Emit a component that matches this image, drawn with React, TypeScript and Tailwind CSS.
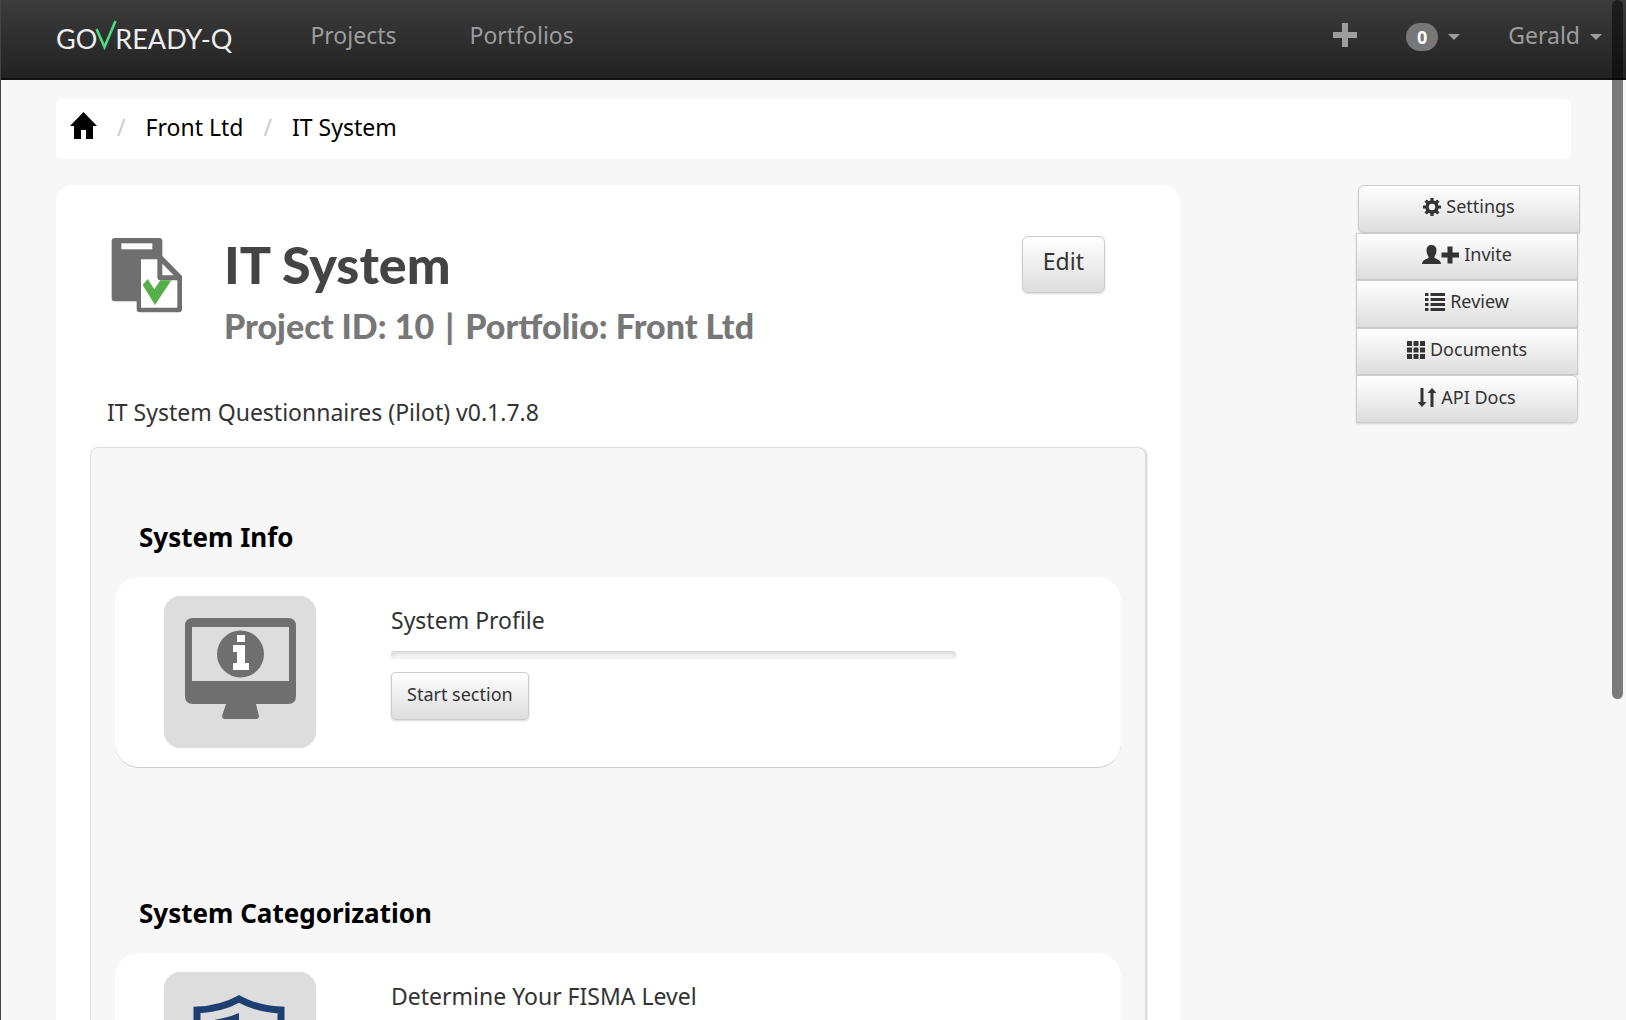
import type { ReactNode } from "react";

const buttonFace =
  "border border-[#cccccc] bg-linear-to-b from-white to-[#dddddd] text-[#333333] shadow-[0_1px_2px_rgba(0,0,0,0.15)]";

function Caret() {
  return <span className="mt-1 inline-block border-x-6 border-t-6 border-x-transparent border-t-current" />;
}

function CheckMark() {
  return (
    <svg width="22" height="30" viewBox="0 0 22 30" fill="none" className="-mx-0.5 mb-2" aria-hidden="true">
      <path d="M1.5 9 L9.5 27 L20.5 1" stroke="#4ade80" strokeWidth="2.6" />
    </svg>
  );
}

function HomeIcon() {
  return (
    <svg width="27" height="27" viewBox="0 0 27 27" className="mb-1" aria-hidden="true">
      <path d="M13.5 0 L27 14 H23 V27 H16 V18 H11 V27 H4 V14 H0 Z" fill="#000" />
    </svg>
  );
}

function ProjectIcon() {
  return (
    <svg width="90" height="90" viewBox="0 0 270 270" aria-hidden="true">
      <path fill="#6f6f6f" d="M45 24 H177 Q187 24 187 34 V78 L246 138 V237 Q246 247 236 247 H120 Q110 247 110 237 V214 H45 Q35 214 35 204 V34 Q35 24 45 24 Z" />
      <rect x="64" y="40" width="93" height="18" fill="#fff" />
      <path fill="#fff" d="M123 88 H172 V142 Q172 151 181 151 H232 V233 H123 Z" />
      <path fill="#fff" d="M187 101 L221 136 H187 Z" />
      <path fill="#56b04a" d="M128 165 L143 147 L163 178 L181 151 H214 L165 225 Z" />
    </svg>
  );
}

function MonitorIcon() {
  return (
    <svg width="152" height="152" viewBox="0 0 152 152" aria-hidden="true">
      <path fill="#6f6f6f" fillRule="evenodd" d="M29 22 H124 Q132 22 132 30 V100 Q132 108 124 108 H92 L95 120 Q95 123 92 123 H61 Q58 123 58 120 L62 108 H29 Q21 108 21 100 V30 Q21 22 29 22 Z M28 31 V85 H125 V31 Z" />
      <circle cx="76.500" cy="58" r="23.500" fill="#6f6f6f" />
      <path fill="#fff" d="M73 39 H81 V46 H73 Z M69 49 H81 V67 H85 V74 H69 V67 H73 V56 H69 Z" />
    </svg>
  );
}

function ShieldIcon() {
  return (
    <svg width="152" height="152" viewBox="0 0 152 152" aria-hidden="true">
      <path d="M75 27 Q57 37 33 38 V76 Q34 110 75 128 Q116 110 117 76 V38 Q93 37 75 27 Z" fill="none" stroke="#1d3f72" strokeWidth="7" />
      <path d="M75 41 Q64 46 44 49 V76 Q45 96 75 114 Z" fill="#1d3f72" />
    </svg>
  );
}

function GearIcon() {
  return (
    <svg width="18" height="18" viewBox="0 0 18 18" aria-hidden="true">
      <circle cx="9" cy="9" r="5" fill="none" stroke="#333" strokeWidth="3.500" />
      <path stroke="#333" strokeWidth="3.200" d="M9 0 V4 M9 14 V18 M0 9 H4 M14 9 H18 M2.600 2.600 L5.400 5.400 M12.600 12.600 L15.400 15.400 M15.400 2.600 L12.600 5.400 M5.400 12.600 L2.600 15.400" />
    </svg>
  );
}

function InviteIcon() {
  return (
    <svg width="37" height="19" viewBox="0 0 37 19" fill="#333" aria-hidden="true">
      <path d="M9.500 0 Q14.500 0 14.500 5.500 Q14.500 9 12.500 11.500 V13 Q19 15 19 19 H0 Q0 15 6.500 13 V11.500 Q4.500 9 4.500 5.500 Q4.500 0 9.500 0 Z" />
      <path d="M25.500 1.500 H30.500 V7.500 H37 V12.500 H30.500 V18.500 H25.500 V12.500 H19.500 V7.500 H25.500 Z" />
    </svg>
  );
}

function ListIcon() {
  return (
    <svg width="20" height="18" viewBox="0 0 20 18" aria-hidden="true">
      <path stroke="#333" strokeWidth="3" d="M0 1.500 H3.500 M5.500 1.500 H20 M0 6.500 H3.500 M5.500 6.500 H20 M0 11.500 H3.500 M5.500 11.500 H20 M0 16.500 H3.500 M5.500 16.500 H20" />
    </svg>
  );
}

function GridIcon() {
  return (
    <svg width="18" height="18" viewBox="0 0 18 18" aria-hidden="true">
      <path stroke="#333" strokeWidth="5" d="M0 2.500 H5 M6.500 2.500 H11.500 M13 2.500 H18 M0 9 H5 M6.500 9 H11.500 M13 9 H18 M0 15.500 H5 M6.500 15.500 H11.500 M13 15.500 H18" />
    </svg>
  );
}

function SortIcon() {
  return (
    <svg width="18" height="19" viewBox="0 0 18 19" fill="#333" aria-hidden="true">
      <path d="M2.500 0 H5.500 V14 H8.500 L4 19 L-0.500 14 H2.500 Z M12.500 19 H15.500 V5 H18.500 L14 0 L9.500 5 H12.500 Z" />
    </svg>
  );
}

const actions: { label: string; icon: ReactNode; shape: string }[] = [
  { label: "Settings", icon: <GearIcon />, shape: "rounded-l-md" },
  { label: "Invite", icon: <InviteIcon />, shape: "-ml-0.5 mr-0.5" },
  { label: "Review", icon: <ListIcon />, shape: "-ml-0.5 mr-0.5" },
  { label: "Documents", icon: <GridIcon />, shape: "-ml-0.5 mr-0.5" },
  { label: "API Docs", icon: <SortIcon />, shape: "-ml-0.5 mr-0.5 rounded-r-md" },
];

function Section({ title, task, icon, action }: { title: string; task: string; icon: ReactNode; action?: string }) {
  return (
    <section className="mb-[125px]">
      <h2 className="ml-6 text-[26px] leading-10 font-bold text-black">{title}</h2>
      <div className="mt-5 flex items-start rounded-3xl border-b border-[#cccccc] bg-white py-[19px] pl-[49px]">
        <div className="h-[152px] w-[152px] shrink-0 overflow-hidden rounded-2xl bg-[#dddddd]">{icon}</div>
        <div className="mr-[165px] ml-[75px] flex-1 pt-2">
          <h3 className="text-[23px] leading-8 text-[#333333]">{task}</h3>
          <div
            role="progressbar"
            aria-label={task}
            aria-valuenow={0}
            className="mt-[15px] h-2 rounded bg-[#f5f5f5] shadow-[inset_0_2px_4px_rgba(0,0,0,0.15)]"
          />
          {action && (
            <button type="button" className={`mt-[13px] h-12 rounded px-[15px] pb-1 text-[18px] leading-6 ${buttonFace}`}>
              {action}
            </button>
          )}
        </div>
      </div>
    </section>
  );
}

export default function App() {
  return (
    <div className="relative h-screen overflow-hidden border-l border-[#444444] bg-[#f7f7f7] font-['Noto_Sans',sans-serif]">
      <nav className="flex h-20 items-center border-b-2 border-[#111111] bg-linear-to-b from-[#3c3c3c] to-[#222222] pr-6 pl-[55px] text-[23px] text-[#9d9d9d]">
        <a href="#home" className="flex items-center font-['Lato',sans-serif] text-[27px] font-normal text-[#eeeeee]">
          GO
          <CheckMark />
          READY-Q
        </a>
        <a href="#projects" className="mb-2 ml-[78px]">Projects</a>
        <a href="#portfolios" className="mb-2 ml-[73px]">Portfolios</a>
        <div className="mb-2 ml-auto flex items-center">
          <button type="button" aria-label="Add">
            <svg width="24" height="24" viewBox="0 0 24 24" aria-hidden="true">
              <path d="M9 0 H15 V9 H24 V15 H15 V24 H9 V15 H0 V9 H9 Z" fill="#9d9d9d" />
            </svg>
          </button>
          <button type="button" className="ml-[49px] flex items-center gap-[10px]">
            <span className="mt-1 flex h-7 w-8 items-center justify-center rounded-full bg-[#777777] text-[18px] font-bold text-white">0</span>
            <Caret />
          </button>
          <button type="button" className="ml-12 flex items-center gap-[10px]">
            Gerald <Caret />
          </button>
        </div>
      </nav>

      <div className="pr-[46px] pl-[55px]">
        <nav aria-label="Breadcrumb" className="mt-[19px] mr-[9px] flex h-15 items-center rounded-md bg-white px-[14px] pb-1 text-[23px] text-black">
          <a href="#home" aria-label="Home"><HomeIcon /></a>
          <span className="mx-5 text-[#cccccc]">/</span>
          <a href="#front">Front Ltd</a>
          <span className="mx-5 text-[#cccccc]">/</span>
          <a href="#system">IT System</a>
        </nav>

        <div className="mt-[26px] flex items-start">
          <main className="mr-[178px] min-w-0 flex-1 rounded-2xl bg-white px-[34px] pb-8">
            <header className="flex items-start pt-[45px] pr-[41px] pl-[10px]">
              <ProjectIcon />
              <div className="ml-[34px] flex-1 font-['Lato_Black','Lato',sans-serif] font-black">
                <h1 className="mt-1 text-[52px] leading-[60px] text-[#444444]">IT System</h1>
                <p className="mt-0.5 text-[34px] leading-[60px] text-[#777777]">
                  Project ID: 10 <span className="mx-[3px]">|</span> Portfolio: Front Ltd
                </p>
              </div>
              <button type="button" className={`mt-[6px] h-[57px] rounded-md px-5 pb-[6px] text-[23px] ${buttonFace}`}>
                Edit
              </button>
            </header>
            <p className="mt-10 ml-[17px] text-[23px] leading-8 text-[#333333]">IT System Questionnaires (Pilot) v0.1.7.8</p>
            <div className="mt-[19px] rounded-lg border border-[#dddddd] bg-[#f7f7f7] px-6 pt-[69px] shadow-[1px_1px_2px_rgba(0,0,0,0.2)]">
              <Section title="System Info" task="System Profile" icon={<MonitorIcon />} action="Start section" />
              <Section title="System Categorization" task="Determine Your FISMA Level" icon={<ShieldIcon />} />
            </div>
          </main>

          <aside className="flex h-[238px] w-[222px] shrink-0 flex-col">
            {actions.map((a) => (
              <button key={a.label} type="button" className={`flex flex-1 items-center justify-center gap-[5px] pb-1 text-[18px] ${buttonFace} ${a.shape}`}>
                {a.icon}
                {a.label}
              </button>
            ))}
          </aside>
        </div>
      </div>

      <div className="absolute top-0 right-[3px] h-[699px] w-[11px] rounded-full bg-black/50" />
    </div>
  );
}
